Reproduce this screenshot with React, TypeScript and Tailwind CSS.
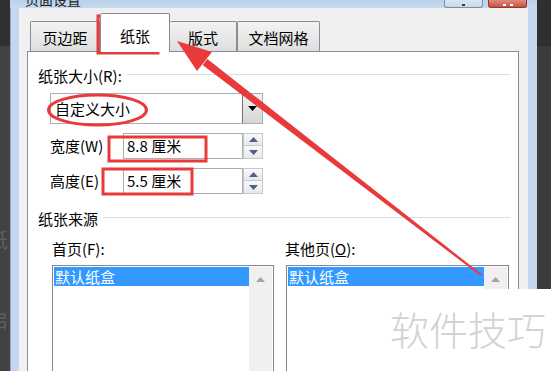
const FONT = "font-['Noto_Sans_CJK_SC','Noto_Sans',sans-serif]";

function UpArrow({ color = "#4d5f8a" }: { color?: string }) {
  return (
    <svg width="9" height="5" viewBox="0 0 9 5">
      <path d="M0 5 L4.5 0 L9 5 Z" fill={color} />
    </svg>
  );
}

function DownArrow({ color = "#4d5f8a" }: { color?: string }) {
  return (
    <svg width="9" height="5" viewBox="0 0 9 5">
      <path d="M0 0 L4.5 5 L9 0 Z" fill={color} />
    </svg>
  );
}

function Spinner() {
  return (
    <div className="flex w-[20px] flex-col">
      <div className="flex h-[13px] items-center justify-center border border-[#c4c8d0] bg-gradient-to-b from-[#fafafa] to-[#e8e8e8]">
        <UpArrow />
      </div>
      <div className="-mt-px flex h-[14px] items-center justify-center border border-[#c4c8d0] bg-gradient-to-b from-[#fafafa] to-[#e8e8e8]">
        <DownArrow />
      </div>
    </div>
  );
}

function SizeRow({ label, value }: { label: string; value: string }) {
  return (
    <div className="ml-[22px] flex h-[26px] items-center">
      <span className="w-[73px] leading-[20px]">{label}</span>
      <div className="flex h-[26px] w-[120px] items-center border border-[#abadb3] bg-white pl-[3px] leading-[20px]">
        {value}
      </div>
      <Spinner />
    </div>
  );
}

function SectionLabel({ text }: { text: string }) {
  return (
    <div className="flex h-[20px] items-center pl-[10px]">
      <span className="leading-[20px]">{text}</span>
      <div className="mr-[8px] ml-[5px] -mt-[3px] h-px flex-1 bg-[#d6dee6]" />
    </div>
  );
}

function ListBox({ className }: { className: string }) {
  return (
    <div className={`flex h-[120px] border border-[#828790] bg-white p-px ${className}`}>
      <div className="flex-1">
        <div className="h-[19px] bg-[#3399ff] pl-px text-[15px] leading-[19px] text-white">默认纸盒</div>
      </div>
      <div className="flex w-[23px] justify-center bg-[#f0f0f0] pt-[10px]">
        <UpArrow color="#a3a3a3" />
      </div>
    </div>
  );
}

function Tab({ label, selected, className }: { label: string; selected?: boolean; className: string }) {
  if (selected) {
    return (
      <div className={`relative z-10 -mb-px flex h-[39px] items-center justify-center rounded-t-[2px] border border-b-0 border-[#898c95] bg-white pt-[6px] ${className}`}>
        {label}
      </div>
    );
  }
  return (
    <div className={`flex h-[30px] items-center justify-center rounded-t-[2px] border border-b-0 border-[#898c95] bg-gradient-to-b from-[#f3f3f3] to-[#dedede] pt-[4px] ${className}`}>
      {label}
    </div>
  );
}

export default function App() {
  return (
    <div className={`relative flex h-[371px] w-[551px] overflow-hidden text-[15px] text-black ${FONT}`}>
      {/* left backdrop */}
      <div className="flex w-[10px] flex-col overflow-hidden">
        <div className="h-[46px] bg-[#303030]" />
        <div className="flex flex-1 flex-col bg-[#424242] text-[20px] leading-[20px] text-[#5e5e5e]">
          <span className="mt-[184px] -ml-[12px]">纸</span>
          <span className="mt-[60px] -ml-[12px]">启</span>
        </div>
      </div>

      {/* window */}
      <div className="flex w-[527px] flex-col bg-[#c3d8ee]">
        <div className="flex h-[12px] items-start justify-between bg-gradient-to-b from-[#b9d1ea] to-[#c6daef]">
          <span className="-mt-[10px] pl-[15px] text-[14px] leading-[18px] text-[#1e1e1e]">页面设置</span>
          <div className="mr-[10px] flex gap-[5px]">
            <div className="flex h-[8px] w-[39px] items-end justify-center rounded-b-[3px] border border-t-0 border-[#7b8ca5] bg-gradient-to-b from-[#dbe6f3] to-[#c9d8ea]">
              <div className="mb-[1px] h-[2px] w-[3px] bg-[#3b3b3b]" />
            </div>
            <div className="flex h-[8px] w-[39px] items-end justify-center rounded-b-[3px] border border-t-0 border-[#8a3a32] bg-gradient-to-b from-[#e08a7c] to-[#c7503f]">
              <div className="mb-[1px] flex gap-[4px]">
                <div className="h-[2px] w-[3px] bg-white" />
                <div className="h-[2px] w-[3px] bg-white" />
              </div>
            </div>
          </div>
        </div>

        <div className="flex flex-1">
          <div className="w-[9px] border-l border-[#93a9c2]" />
          <div className="flex flex-1 flex-col bg-[#f0f0f0] pt-[5px] pr-[9px] pl-[8px]">
            {/* tabs */}
            <div className="flex h-[38px] items-end pl-[3px]">
              <Tab label="页边距" className="w-[70px]" />
              <Tab label="纸张" selected className="w-[70px]" />
              <Tab label="版式" className="w-[67px] border-l-0" />
              <Tab label="文档网格" className="w-[83px]" />
            </div>

            {/* panel */}
            <div className="flex flex-1 flex-col border border-b-0 border-[#898c95] bg-white pt-[14px]">
              <SectionLabel text="纸张大小(R):" />

              <div className="mt-[7px] ml-[22px] flex h-[31px] w-[213px] border border-[#abadb3] bg-white">
                <div className="flex flex-1 items-center pl-[4px] leading-[20px]">自定义大小</div>
                <div className="flex w-[20px] items-center justify-center border-l border-[#707070] bg-gradient-to-b from-[#f2f2f2] to-[#d6d6d6]">
                  <DownArrow color="#000000" />
                </div>
              </div>

              <div className="mt-[9px]">
                <SizeRow label="宽度(W)" value="8.8 厘米" />
              </div>
              <div className="mt-[9px]">
                <SizeRow label="高度(E)" value="5.5 厘米" />
              </div>

              <div className="mt-[15px]">
                <SectionLabel text="纸张来源" />
              </div>

              <div className="mt-[10px] flex h-[20px] pl-[24px] leading-[20px]">
                <span className="w-[233px]">首页(F):</span>
                <span>
                  其他页(<span className="underline">O</span>):
                </span>
              </div>

              <div className="mt-[6px] flex gap-[12px] pl-[24px]">
                <ListBox className="w-[222px]" />
                <ListBox className="w-[223px]" />
              </div>
            </div>
          </div>
          <div className="w-[9px] bg-[#c3d8ee]" />
        </div>
      </div>

      {/* right backdrop */}
      <div className="flex w-[14px] flex-col">
        <div className="h-[46px] bg-[#2f2f2f]" />
        <div className="flex-1 bg-[#3c3c3c]" />
      </div>

      {/* annotations */}
      <svg className="pointer-events-none absolute top-0 left-0" width="551" height="371" viewBox="0 0 551 371">
        <rect x="98" y="16" width="60" height="37" fill="none" stroke="#e83a3a" strokeWidth="3" />
        <ellipse cx="97.5" cy="110" rx="49" ry="15" fill="none" stroke="#e83a3a" strokeWidth="3" />
        <rect x="109" y="137" width="97" height="24" fill="none" stroke="#e83a3a" strokeWidth="3" />
        <rect x="103" y="169" width="89" height="25" fill="none" stroke="#e83a3a" strokeWidth="3" />
        <polygon points="177,41 197,71 212,52" fill="#e83a3a" />
        <polygon points="202.6,65 480.4,275.8 481.6,274.2 207.4,59" fill="#e83a3a" />
      </svg>

      {/* watermark */}
      <div className="absolute top-[289px] left-[385px] flex h-[82px] w-[166px] items-center bg-white pb-[4px] pl-[5px]">
        <span className="text-[39px] leading-[44px] font-light text-[#d2d2d2]">软件技巧</span>
      </div>
    </div>
  );
}
